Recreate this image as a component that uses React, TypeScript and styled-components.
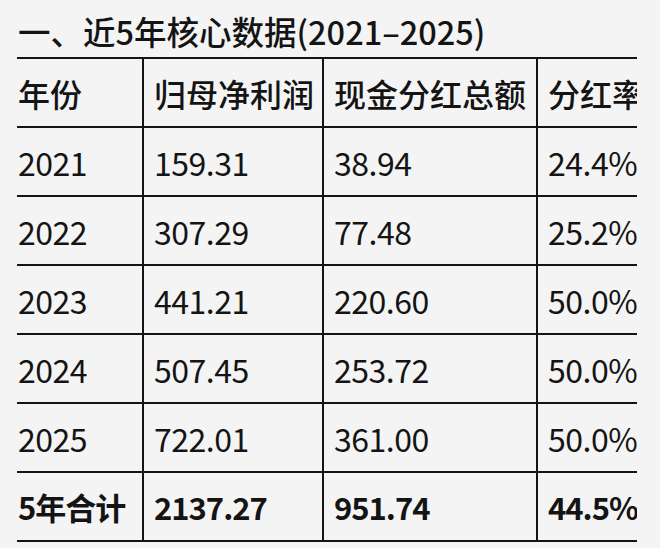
import React from 'react';
import styled, {createGlobalStyle} from 'styled-components';

const GlobalStyle = createGlobalStyle`
    html, body {
        margin: 0;
        padding: 0;
        background: #f4f4f4;
    }
`;

interface Row {
    year: string;
    profit: string;
    dividend: string;
    ratio: string;
}

const rows: Row[] = [
    {year: '2021', profit: '159.31', dividend: '38.94', ratio: '24.4%'},
    {year: '2022', profit: '307.29', dividend: '77.48', ratio: '25.2%'},
    {year: '2023', profit: '441.21', dividend: '220.60', ratio: '50.0%'},
    {year: '2024', profit: '507.45', dividend: '253.72', ratio: '50.0%'},
    {year: '2025', profit: '722.01', dividend: '361.00', ratio: '50.0%'},
];

const total: Row = {year: '5年合计', profit: '2137.27', dividend: '951.74', ratio: '44.5%'};

function App() {
    return (
        <Page>
            <GlobalStyle/>
            <Title>一、近5年核心数据(2021–2025)</Title>
            <TableWrap>
                <Table>
                    <colgroup>
                        <col style={{width: 126}}/>
                        <col style={{width: 180}}/>
                        <col style={{width: 214}}/>
                        <col style={{width: 140}}/>
                    </colgroup>
                    <thead>
                    <tr>
                        <HeadCell>年份</HeadCell>
                        <HeadCell>归母净利润</HeadCell>
                        <HeadCell>现金分红总额</HeadCell>
                        <HeadCell>分红率</HeadCell>
                    </tr>
                    </thead>
                    <tbody>
                    {rows.map((row) => (
                        <tr key={row.year}>
                            <Cell>{row.year}</Cell>
                            <Cell>{row.profit}</Cell>
                            <Cell>{row.dividend}</Cell>
                            <Cell>{row.ratio}</Cell>
                        </tr>
                    ))}
                    <tr>
                        <Cell $bold>{total.year}</Cell>
                        <Cell $bold>{total.profit}</Cell>
                        <Cell $bold>{total.dividend}</Cell>
                        <Cell $bold>{total.ratio}</Cell>
                    </tr>
                    </tbody>
                </Table>
            </TableWrap>
        </Page>
    );
}

export default App;

const Page = styled.div`
    padding: 11px 0 0 17px;
    font-family: "Noto Sans CJK SC", "Noto Sans", sans-serif;
    color: #141414;
`;

const Title = styled.h2`
    margin: 0 0 6px 1px;
    font-size: 32.5px;
    line-height: 40px;
    font-weight: 500;
    white-space: nowrap;
`;

const TableWrap = styled.div`
    width: 620px;
    overflow: hidden;
`;

const Table = styled.table`
    border-collapse: collapse;
    table-layout: fixed;
    width: 660px;
`;

const HeadCell = styled.th`
    height: 67px;
    padding: 0 0 0 10px;
    text-align: left;
    font-size: 32px;
    font-weight: 500;
    white-space: nowrap;
    border-top: 2px solid #141414;
    border-bottom: 2px solid #141414;
    border-left: 2px solid #141414;

    &:first-child {
        border-left: none;
        padding-left: 1px;
    }
`;

const Cell = styled.td<{ $bold?: boolean }>`
    height: 67px;
    padding: 0 0 0 10px;
    font-size: ${(p) => (p.$bold ? '31px' : '32px')};
    letter-spacing: ${(p) => (p.$bold ? '-1px' : '-0.5px')};
    font-weight: ${(p) => (p.$bold ? 700 : 400)};
    white-space: nowrap;
    border-bottom: 2px solid #141414;
    border-left: 2px solid #141414;

    &:first-child {
        border-left: none;
        padding-left: 1px;
    }
`;
